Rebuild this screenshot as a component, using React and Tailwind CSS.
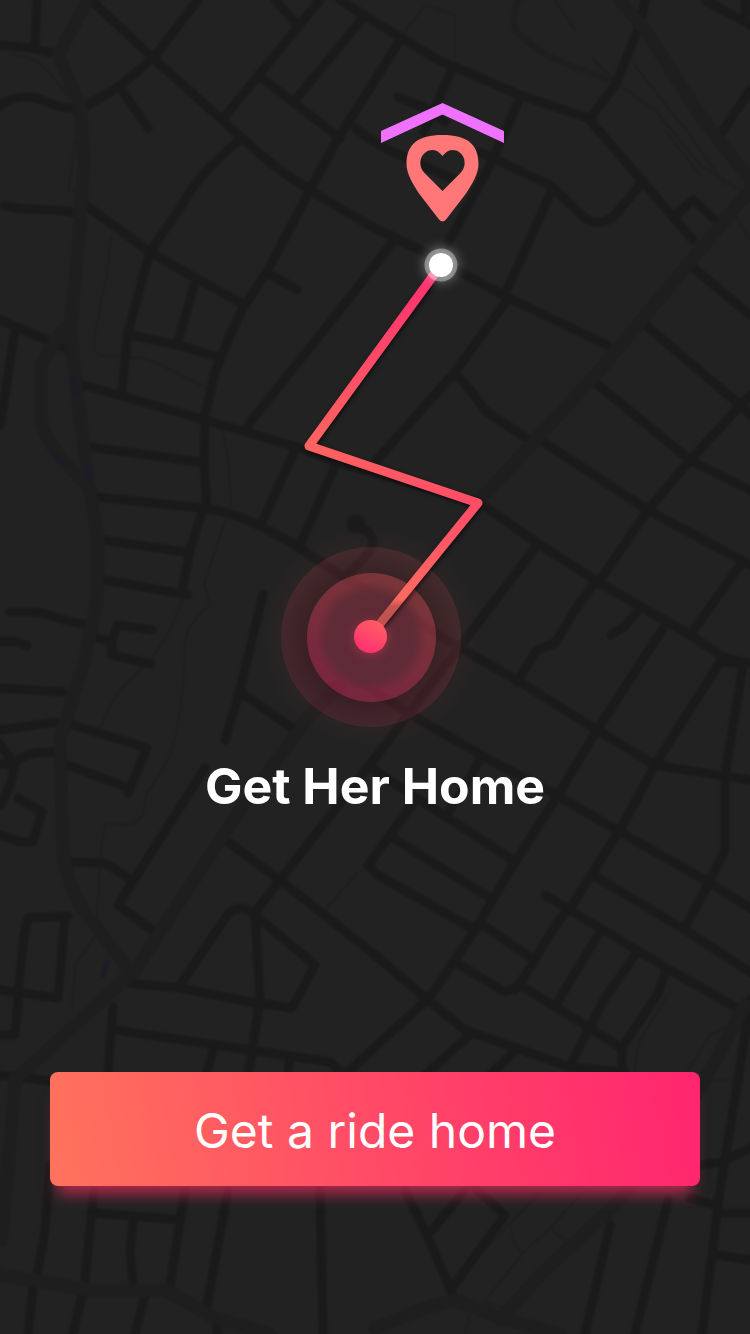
const ROADS = [
  'M37 0L35 45', 'M0 45L30 48L53 53', 'M0 106C10 96 30 95 42 100C56 106 62 108 75 108',
  'M94 3L153 58L222 120L242 138C262 156 275 168 310 190C335 205 355 218 375 228L420 250L507 297L607 345',
  'M198 0L153 58L120 86L86 106', 'M119 86L148 128', 'M275 0L295 22', 'M320 0L222 120', 'M363 18L295 100', 'M258 75L340 138',
  'M340 0L375 22L425 52Q440 62 455 67L520 95L588 118L693 240',
  'M400 40L375 80L337 140L310 190L268 270L243 308L228 340L215 372L205 415L204 465L207 508',
  'M201 515L190 550L182 592', 'M398 97L425 108L445 122', 'M356 128Q370 142 400 155L460 182',
  'M240 140C215 160 195 180 180 208L150 252L128 332L122 390', 'M5 206C30 212 50 207 75 213',
  'M88 207L150 252L195 278L245 305', 'M195 282L178 342', 'M268 273L297 290', 'M392 243L375 265L320 335L248 425',
  'M0 320L35 335L65 348', 'M15 330L5 395L0 425', 'M130 335L178 345L218 357',
  'M83 385L122 396L205 420L300 448L337 462L480 503L540 545L600 583L690 635L722 656Q738 662 750 663',
  'M90 447L200 462', 'M97 497L200 508C240 512 265 528 300 548C330 570 350 580 370 592L455 645L520 682L597 730L655 765L730 777L750 780',
  'M103 540L185 552', 'M105 580L188 595', 'M295 450L262 522', 'M337 462L300 545', 'M365 530C380 540 372 552 350 572',
  'M10 612L38 612C55 616 65 622 83 624', 'M0 642C15 640 20 643 27 646', 'M97 638L112 642M152 630L118 625Q110 640 112 655L151 664',
  'M263 594L240 690L225 740', 'M240 692L295 730', 'M0 688L63 692', 'M0 730L55 722', 'M70 724L147 748L128 793M68 765L128 788',
  'M0 744L15 765M0 764L12 765C25 752 38 752 53 752M15 765C12 785 5 795 0 805', 'M18 798L42 812L33 842L20 842L0 835',
  'M72 862L105 863L130 879', 'M205 768L118 905L152 930', 'M68 916L28 918Q25 920 18 994M65 918L58 998L0 990M18 998L15 1035L0 1035',
  'M228 842L280 880L375 955L428 1000L465 1030L570 1067L625 1072', 'M375 758L280 880L255 912',
  'M180 985L228 914Q240 902 255 915L315 965L292 1008L250 1002L180 988L128 983', 'M255 915L260 1000L249 1070',
  'M535 548L465 640L410 712L375 758', 'M350 675L415 717L490 760L560 797L620 832L710 883L750 908',
  'M371 768L420 800L513 860', 'M393 838L490 898', 'M412 805L368 865L378 875L475 930', 'M482 757L447 815',
  'M593 585L575 610L555 643L537 650L517 682', 'M662 630L597 730L555 800L515 862L475 930L430 997L375 1047L345 1075',
  'M720 662L655 765L620 830L570 908Q555 922 535 960L515 990', 'M720 662L745 663M743 665L725 775L725 850L705 890L685 928',
  'M593 875L685 930L750 972', 'M545 895L620 940L670 970L737 1008', 'M598 935L557 1003', 'M635 955L605 998L570 1065', 'M665 972L658 994L622 1047V1072',
  'M483 925L530 957M460 965L505 992L520 985L588 1027L622 1048', 'M470 1035L425 1075', 'M518 1048L490 1075',
  'M113 1007L108 1072', 'M115 1030L250 1050L330 1062L350 1080', 'M213 1050L207 1072', 'M290 1058L288 1072', 'M0 1075L50 1081',
  'M50 1165L45 1230L37 1275', 'M94 1190L85 1280', 'M93 1213L180 1220', 'M133 1222L130 1250L133 1282', 'M185 1190L170 1285',
  'M228 1190L207 1305', 'M320 1188L323 1334', 'M33 1290L28 1334', 'M82 1295L73 1334', 'M145 1295L135 1334', 'M217 1320V1334',
  'M405 1190L427 1235L452 1293', 'M465 1190L428 1235', 'M475 1188L505 1215L452 1288', 'M610 1225L585 1334', 'M668 1200L635 1334',
  'M690 1198L715 1205', 'M750 1000L738 1080L720 1190L702 1334', 'M700 1165L722 1162L750 1148', 'M722 1213H750', 'M718 1255L750 1260',
  'M453 67L424 132', 'M520 98L490 165L448 243', 'M480 152L550 185L585 218Q600 228 615 215L640 185', 'M552 190L507 290',
  'M507 300L455 372L375 462', 'M645 0L640 25L615 85L590 118', 'M678 213L693 200L713 218', 'M705 0L750 25M745 14V0', 'M750 90L722 132',
  'M690 265L750 315', 'M642 322L740 405L750 415', 'M455 375C470 385 478 403 488 413L525 437', 'M540 440L648 510L750 565',
  'M592 380L690 460L750 490', 'M750 395L690 460L648 510L598 583', 'M740 565L690 635', 'M637 612L625 626L611 635',
]

const AVENUES = [
  'M88 0L58 55L80 105L84 160L78 250L70 330L78 400L88 480L98 540L97 600L85 660L60 740L63 850Q68 895 95 925L125 965',
  'M62 330L41 365V420Q46 448 88 485',
  'M750 190L600 370L480 500',
  'M340 685L310 715L240 810L135 970L15 1080L2 1240',
  'M620 0L645 30L700 115L750 180',
  'M0 1275L90 1290L165 1290L215 1318L270 1334',
  'M375 1328L425 1308L455 1300L500 1318L560 1334',
  'M500 1320L540 1275L620 1200L660 1150L705 1080L745 1005',
]

const LANES = [
  'M10 54C45 58 48 72 70 98', 'M75 140L69 190L78 193', 'M111 236C108 285 98 310 94 340V350L100 355L140 358C170 365 180 378 208 388',
  'M222 430Q230 460 231 505Q215 550 204 585L211 605Q190 620 185 640Q184 720 168 760L146 795Q145 825 125 825L105 823Q100 850 96 935L75 965L72 1010',
  'M182 598Q178 620 150 662Q112 690 100 730', 'M425 5L455 15V65M425 5L402 36',
  'M555 0L575 30M592 58L618 84L655 110L700 165L740 190M632 62L690 135L725 185',
  'M665 130L700 175', 'M735 215L750 240', 'M325 910L358 872',
  'M668 994L640 1040L634 1070M688 1070L710 1035L740 1022M705 1080H738', 'M510 1225Q512 1245 523 1253L484 1302L510 1310L522 1290L570 1245L550 1228L580 1195M523 1253L550 1228',
  'M540 1192L475 1260', 'M470 1315L465 1334',
]

function CityMap() {
  return (
    <svg
      className="absolute inset-0 h-full w-full"
      viewBox="0 0 750 1334"
      preserveAspectRatio="xMidYMid slice"
      fill="none"
      strokeLinecap="round"
      strokeLinejoin="round"
      aria-hidden="true"
    >
      <defs>
        <filter id="map-soft" x="0" y="0" width="750" height="1334" filterUnits="userSpaceOnUse" colorInterpolationFilters="sRGB">
          <feGaussianBlur stdDeviation="0.9" />
        </filter>
      </defs>
      <g filter="url(#map-soft)">
        <rect width="750" height="1334" fill="#222222" />
        <g stroke="#1e1e1e" strokeWidth="2">
          {LANES.map((d) => <path key={d} d={d} />)}
        </g>
        <path d="M518 0Q508 25 520 35Q545 58 575 67L615 82" stroke="#1e1e1e" strokeWidth="6" />
        <g stroke="#1a1a1a" strokeWidth="9">
          {ROADS.map((d) => <path key={d} d={d} />)}
        </g>
        <circle cx="356" cy="524" r="9.5" fill="#1a1a1a" />
        <g stroke="#1e1e1e" strokeWidth="13">
          {AVENUES.map((d) => <path key={d} d={d} />)}
        </g>
        <g stroke="#1b1c28" strokeWidth="5">
          <path d="M74 379L77 395" />
          <path d="M54 455L66 466" />
          <path d="M86 466L88 480" />
          <path d="M107 962L103 975" />
        </g>
      </g>
    </svg>
  )
}

function RouteDrawing() {
  return (
    <svg className="block w-full" viewBox="0 0 750 758" role="img" aria-label="Route home" fill="none">
      <defs>
        <linearGradient id="route" gradientUnits="userSpaceOnUse" x1="0" y1="265" x2="0" y2="636">
          <stop offset="0" stopColor="#ff2d70" />
          <stop offset="0.48" stopColor="#ff6460" />
          <stop offset="0.64" stopColor="#ff4c67" />
          <stop offset="0.9" stopColor="#ff6a60" />
          <stop offset="0.92" stopColor="#c45550" />
          <stop offset="1" stopColor="#b8504e" />
        </linearGradient>
        <linearGradient id="pulse" x1="0.2" y1="1" x2="0.7" y2="0">
          <stop offset="0" stopColor="#ff2d72" />
          <stop offset="1" stopColor="#ff5f62" />
        </linearGradient>
        <radialGradient id="inner">
          <stop offset="0" stopColor="#5d2b35" />
          <stop offset="0.7" stopColor="#5d2b35" stopOpacity="0.92" />
          <stop offset="0.9" stopColor="#5d2b35" stopOpacity="0" />
        </radialGradient>
        <radialGradient id="halo">
          <stop offset="0.78" stopColor="#ff5060" stopOpacity="0.04" />
          <stop offset="1" stopColor="#ff5060" stopOpacity="0" />
        </radialGradient>
        <radialGradient id="ring">
          <stop offset="0.74" stopColor="#000" stopOpacity="0.16" />
          <stop offset="1" stopColor="#000" stopOpacity="0" />
        </radialGradient>
        <filter id="glow" x="-100%" y="-100%" width="300%" height="300%" colorInterpolationFilters="sRGB">
          <feGaussianBlur stdDeviation="6" />
        </filter>
        <filter id="route-shadow" x="-10%" y="-10%" width="120%" height="120%" colorInterpolationFilters="sRGB">
          <feDropShadow dx="1" dy="2" stdDeviation="2" floodColor="#000" floodOpacity="0.6" />
        </filter>
      </defs>

      <path d="M381 131L442.500 103L504 131V143L442.500 114.500L381 143Z" fill="#ef72ff" />
      <path
        fillRule="evenodd"
        fill="#ff7777"
        d="M442.500 135C467 135 478.500 144 478.500 164C478.500 174 472 184 466 193.500L446 219.500Q442.500 223.500 439 219.500L419 193.500C413 184 406.500 174 406.500 164C406.500 144 418 135 442.500 135ZM442.500 156C437 149 430.500 149 426 152C419 156.500 418.500 167 424.500 173L442.500 191L460.500 173C466.500 167 466 156.500 459 152C454.500 149 448 149 442.500 156Z"
      />

      <circle cx="371" cy="637" r="112" fill="url(#halo)" />
      <circle cx="371" cy="637" r="90" fill="url(#pulse)" fillOpacity="0.12" />
      <circle cx="371" cy="637" r="90" fill="url(#ring)" />
      <circle cx="371.500" cy="637.500" r="64.500" fill="url(#pulse)" fillOpacity="0.32" />
      <circle cx="371" cy="637" r="62" fill="url(#inner)" />
      <path
        d="M441 265L309 446L478 503L370 636"
        stroke="url(#route)"
        strokeWidth="9"
        strokeLinejoin="round"
        filter="url(#route-shadow)"
      />
      <circle cx="371" cy="638" r="16" fill="#ff3c68" fillOpacity="0.45" filter="url(#glow)" />
      <circle cx="370.500" cy="636.500" r="16.500" fill="url(#pulse)" />

      <circle cx="441" cy="265" r="17" fill="#fff" fillOpacity="0.35" filter="url(#glow)" />
      <circle cx="441" cy="265" r="16.500" fill="#fff" fillOpacity="0.36" />
      <circle cx="441" cy="265" r="12" fill="#fff" />
    </svg>
  )
}

export default function App() {
  return (
    <main className="relative flex min-h-screen flex-col overflow-hidden bg-[#222222] font-['Inter',sans-serif] text-white">
      <CityMap />
      <div className="relative flex flex-1 flex-col">
        <RouteDrawing />
        <h1 className="text-center text-[50px] leading-14 font-bold">Get Her Home</h1>
        <div className="mt-auto px-[50px] pt-8 pb-[148px]">
          <button
            type="button"
            className="h-[114px] w-full rounded-lg bg-linear-[80deg,#ff735c,#ff4a66_50%,#ff256f] pt-1 text-5xl font-normal shadow-[0_16px_14px_-8px_rgba(255,45,100,0.65)]"
          >
            Get a ride home
          </button>
        </div>
      </div>
    </main>
  )
}
